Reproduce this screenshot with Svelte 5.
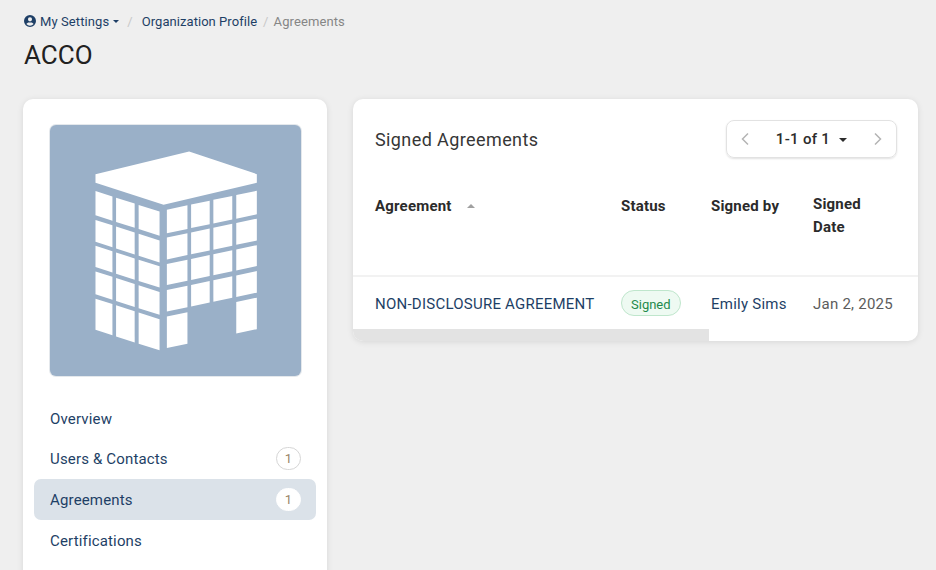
<script>
  const navItems = [
    { label: 'Overview' },
    { label: 'Users & Contacts', count: 1 },
    { label: 'Agreements', count: 1, active: true },
    { label: 'Certifications' }
  ];

  const leftCols = [[165, 216], [227, 283], [295, 358]];
  const leftRows = [[227, 300], [314, 380], [392, 456], [469, 538], [551, 645]];
  const rightCols = [[380, 442], [453, 509], [520, 577], [589, 651]];
  const rightRows = [[226, 297], [310, 376], [390, 453], [468, 533], [548, 643]];

  function cell(x1, x2, top, bottom, base, slope) {
    const y = (x, v) => v + slope * (x - base);
    return [[x1, y(x1, top)], [x2, y(x2, top)], [x2, y(x2, bottom)], [x1, y(x1, bottom)]]
      .map((p) => p.map((n) => n.toFixed(1)).join(','))
      .join(' ');
  }

  const windows = [];
  for (const [x1, x2] of leftCols) {
    for (const [top, bottom] of leftRows) windows.push(cell(x1, x2, top, bottom, 165, 0.32));
  }
  rightCols.forEach(([x1, x2], c) => {
    rightRows.forEach(([top, bottom], r) => {
      // the doorway takes the bottom of the two middle columns
      if (r === 4 && (c === 1 || c === 2)) return;
      windows.push(cell(x1, x2, top, bottom, 651, -0.21));
    });
  });
</script>

<div class="page">
  <nav class="crumbs">
    <span class="crumb">
      <svg class="user" viewBox="0 0 24 24" width="12" height="12">
        <path fill="currentColor" d="M12 0a12 12 0 1 0 0 24a12 12 0 0 0 0-24zm0 4.600a4.100 4.100 0 1 1 0 8.200a4.100 4.100 0 0 1 0-8.200zm0 16.800a9.400 9.400 0 0 1-7.200-3.400c.9-1.900 3-3.100 5.200-3.100h4c2.200 0 4.300 1.200 5.200 3.100a9.400 9.400 0 0 1-7.200 3.400z" />
      </svg>
      My Settings
      <span class="caret small"></span>
    </span>
    <span class="sep first">/</span>
    <span class="crumb org">Organization Profile</span>
    <span class="sep">/</span>
    <span class="current">Agreements</span>
  </nav>
  <h1>ACCO</h1>

  <div class="columns">
    <aside class="card side">
      <div class="logo">
        <svg viewBox="28 28 756 756">
          <polygon fill="#fff" points="165,176 447,108 651,176 651,202 370,268 165,202" />
          {#each windows as points}
            <polygon fill="#fff" {points} />
          {/each}
        </svg>
      </div>
      <ul class="menu">
        {#each navItems as item}
          <li class:active={item.active}>
            <span>{item.label}</span>
            {#if item.count}<span class="count">{item.count}</span>{/if}
          </li>
        {/each}
      </ul>
    </aside>

    <main class="card content">
      <header class="head">
        <h2>Signed Agreements</h2>
        <div class="pager">
          <svg viewBox="0 0 10 14" width="10" height="14"><path d="M8 1.500 2.500 7 8 12.500" /></svg>
          <span class="range">1-1 of 1 <span class="caret"></span></span>
          <svg viewBox="0 0 10 14" width="10" height="14"><path d="M2 1.500 7.500 7 2 12.500" /></svg>
        </div>
      </header>

      <table>
        <colgroup>
          <col style="width: 246px" />
          <col style="width: 90px" />
          <col style="width: 102px" />
          <col />
        </colgroup>
        <thead>
          <tr>
            <th>Agreement <span class="sort"></span></th>
            <th>Status</th>
            <th>Signed by</th>
            <th class="date">Signed<br />Date</th>
          </tr>
        </thead>
        <tbody>
          <tr>
            <td class="name">NON-DISCLOSURE AGREEMENT</td>
            <td class="status"><span class="chip">Signed</span></td>
            <td class="name">Emily Sims</td>
            <td class="muted">Jan 2, 2025</td>
          </tr>
        </tbody>
      </table>
      <div class="scrollbar"></div>
    </main>
  </div>
</div>

<style>
  :global(body) {
    background: #efefef;
    font-family: Roboto, "Liberation Sans", sans-serif;
    overflow: hidden;
  }

  .page {
    height: 570px;
    overflow: hidden;
    padding: 12px 18px 0 24px;
    box-sizing: border-box;
  }

  .crumbs {
    display: flex;
    align-items: center;
    height: 18px;
    font-size: 13px;
    letter-spacing: 0.1px;
    color: #1e3f66;
  }

  .crumb {
    display: flex;
    align-items: center;
  }

  .org {
    letter-spacing: 0.05px;
  }

  .user {
    margin-right: 4px;
  }

  .caret {
    display: inline-block;
    margin-left: 5px;
    border-left: 4px solid transparent;
    border-right: 4px solid transparent;
    border-top: 4px solid #2c2c2c;
    vertical-align: 2px;
  }

  .caret.small {
    margin-left: 4px;
    border-width: 3px 3px 0;
    border-top-color: #1e3f66;
  }

  .sep {
    margin: 0 5px 0 6px;
    color: #c8c8c8;
  }

  .sep.first {
    margin: 0 9px 0 8px;
  }

  .current {
    color: #868686;
  }

  h1 {
    margin: 7px 0 0;
    font-size: 26px;
    line-height: 36px;
    font-weight: 400;
    color: #212121;
  }

  .columns {
    display: flex;
    align-items: flex-start;
    gap: 26px;
    margin: 26px 0 0 -1px;
  }

  .card {
    background: #fff;
    border-radius: 10px;
    box-shadow: 0 1px 6px rgba(0, 0, 0, 0.1);
  }

  .side {
    flex: 0 0 304px;
    height: 520px;
    padding: 26px 11px 0;
    box-sizing: border-box;
  }

  .logo {
    width: 251px;
    height: 251px;
    margin-left: 16px;
    border-radius: 6px;
    background: #9ab0c8;
    box-shadow: 0 0 0 1px #e4e8ec;
    display: flex;
  }

  .logo svg {
    width: 251px;
    height: 251px;
  }

  .menu {
    list-style: none;
    margin: 21px 0 0;
    padding: 0;
  }

  .menu li {
    display: flex;
    align-items: center;
    justify-content: space-between;
    height: 41px;
    box-sizing: border-box;
    padding: 0 15px 0 16px;
    border-radius: 7px;
    font-size: 15px;
    letter-spacing: 0.16px;
    color: #1e3f66;
  }

  .menu li:first-child {
    padding-top: 2px;
  }

  .menu li.active {
    background: #dbe2e9;
  }

  .count {
    width: 23px;
    height: 21px;
    border: 1px solid #d6d6d6;
    border-radius: 12px;
    background: #fff;
    color: #9a8468;
    font-size: 13px;
    letter-spacing: 0;
    line-height: 21px;
    text-align: center;
  }

  .active .count {
    border-color: #fff;
  }

  .content {
    flex: 0 0 565px;
    overflow: hidden;
  }

  .head {
    display: flex;
    align-items: center;
    justify-content: space-between;
    padding: 21px 21px 0 22px;
  }

  h2 {
    margin: 0;
    font-size: 18px;
    font-weight: 400;
    letter-spacing: 0.4px;
    color: #363636;
  }

  .pager {
    display: flex;
    align-items: center;
    justify-content: space-between;
    width: 171px;
    height: 38px;
    padding: 0 13px;
    box-sizing: border-box;
    border: 1px solid #e2e2e2;
    border-radius: 8px;
    box-shadow: 0 1px 2px rgba(0, 0, 0, 0.12);
  }

  .pager svg {
    fill: none;
    stroke: #b4b4b4;
    stroke-width: 1.500;
  }

  .range {
    font-size: 15px;
    font-weight: 500;
    letter-spacing: 0.3px;
    color: #2b2b2b;
  }

  table {
    width: 565px;
    table-layout: fixed;
    border-collapse: collapse;
    font-size: 15px;
    letter-spacing: 0.24px;
  }

  th {
    height: 118px;
    box-sizing: border-box;
    padding: 37px 0 0 22px;
    vertical-align: top;
    text-align: left;
    font-size: 15px;
    font-weight: 700;
    letter-spacing: 0.2px;
    line-height: 23px;
    color: #2b2b2b;
    border-bottom: 2px solid #f2f2f2;
  }

  th.date {
    padding-top: 35px;
  }

  .sort {
    display: inline-block;
    margin-left: 11px;
    border-left: 4px solid transparent;
    border-right: 4px solid transparent;
    border-bottom: 4px solid #a0a0a0;
    vertical-align: 3px;
  }

  td {
    height: 53px;
    box-sizing: border-box;
    padding: 1px 0 0 22px;
  }

  td.status {
    vertical-align: top;
    padding-top: 13px;
  }

  .name {
    color: #1e3f66;
  }

  .muted {
    color: #5c5c5c;
  }

  .chip {
    display: block;
    width: fit-content;
    height: 24px;
    padding: 0 9px;
    border: 1px solid #bfe6cc;
    border-radius: 13px;
    background: #eefaf2;
    color: #1f8a4c;
    font-size: 13px;
    letter-spacing: 0;
    line-height: 28px;
  }

  .scrollbar {
    width: 356px;
    height: 12px;
    background: #e3e3e3;
  }
</style>
